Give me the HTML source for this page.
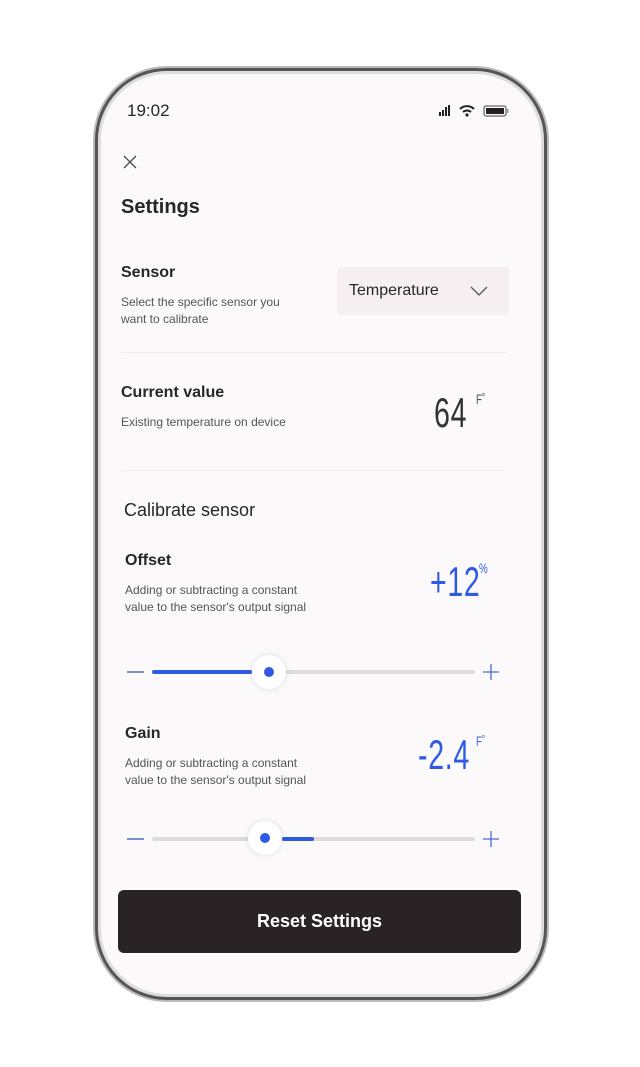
<!DOCTYPE html>
<html><head><meta charset="utf-8"><style>
body{margin:0;width:640px;height:1067px;background:#fff;position:relative;font-family:"Liberation Sans",sans-serif;overflow:hidden}
.phone{position:absolute;left:95px;top:68px;width:446px;height:926px;border:3px solid #555;border-radius:72px;background:#fbf9fa;box-shadow:0 0 0 2px #bbb,inset 0 0 0 3px #ddd}
.a{position:absolute}
.t{color:#2a2527}
.s{color:#555;font-size:12px;line-height:17px}
.h{font-size:16px;font-weight:bold;color:#2a2527}
.line{position:absolute;height:1px;background:#eee}
.num{position:absolute;font-family:"Liberation Sans",sans-serif;font-weight:normal;transform:scaleX(.68);transform-origin:left;white-space:nowrap;letter-spacing:1px;line-height:1}
.unit{position:absolute;font-size:14px;transform:scaleX(.7);transform-origin:left}
.track{position:absolute;height:4px;background:#ddd;border-radius:2px}
.knob{position:absolute;width:34px;height:34px;border-radius:50%;background:#fff;box-shadow:0 0 6px rgba(0,0,0,.12)}
.knob:after{content:"";position:absolute;left:12px;top:12px;width:10px;height:10px;border-radius:50%;background:#2d5be3}
</style></head><body>
<div class="phone"></div>
<div class="a t" style="left:127px;top:101px;font-size:17px">19:02</div>
<svg class="a" style="left:438px;top:104px" width="75" height="14"><rect x="1" y="8" width="2" height="4" fill="#222"/><rect x="4" y="6" width="2" height="6" fill="#222"/><rect x="7" y="3" width="2" height="9" fill="#222"/><rect x="10" y="1" width="2" height="11" fill="#222"/><path d="M22 5a10 10 0 0 1 14 0M25 8a6 6 0 0 1 8 0" stroke="#222" stroke-width="2" fill="none"/><circle cx="29" cy="11" r="1.6" fill="#222"/><rect x="46" y="2" width="22" height="10" rx="2" fill="none" stroke="#444"/><rect x="48" y="4" width="18" height="6" fill="#222"/><rect x="69" y="5" width="1.5" height="4" fill="#999"/></svg>
<svg class="a" style="left:123px;top:155px" width="14" height="14"><path d="M1 1L13 13M13 1L1 13" stroke="#444" stroke-width="1.3"/></svg>
<div class="a t" style="left:121px;top:196px;font-size:20px;font-weight:bold">Settings</div>
<div class="a h" style="left:121px;top:264px">Sensor</div>
<div class="a s" style="left:121px;top:294px">Select the specific sensor you<br>want to calibrate</div>
<div class="a" style="left:337px;top:267px;width:172px;height:48px;background:#f5eff2;border-radius:4px"></div>
<div class="a t" style="left:349px;top:282px;font-size:16px">Temperature</div>
<svg class="a" style="left:470px;top:286px" width="18" height="10"><path d="M1 1L9 9L17 1" stroke="#555" fill="none" stroke-width="1.3"/></svg>
<div class="line" style="left:121px;top:352px;width:386px"></div>
<div class="a h" style="left:121px;top:384px">Current value</div>
<div class="a s" style="left:121px;top:414px">Existing temperature on device</div>
<div class="num" style="left:434px;top:392px;font-size:42px;color:#333">64</div>
<div class="unit" style="left:476px;top:391px;color:#555">F˚</div>
<div class="line" style="left:121px;top:470px;width:386px"></div>
<div class="a t" style="left:124px;top:500px;font-size:18px">Calibrate sensor</div>
<div class="a h" style="left:125px;top:552px">Offset</div>
<div class="a s" style="left:125px;top:582px">Adding or subtracting a constant<br>value to the sensor's output signal</div>
<div class="num" style="left:430px;top:561px;font-size:42px;color:#2d5be3">+12</div>
<div class="unit" style="left:479px;top:560px;color:#2d5be3">%</div>
<div class="a" style="left:127px;top:671px;width:17px;height:1.5px;background:#7a8fd8"></div>
<div class="track" style="left:152px;top:670px;width:323px"></div>
<div class="track" style="left:152px;top:670px;width:100px;background:#2d5be3"></div>
<div class="knob" style="left:252px;top:655px"></div>
<svg class="a" style="left:483px;top:664px" width="16" height="16"><path d="M8 0V16M0 8H16" stroke="#4a6ad8" stroke-width="1.3"/></svg>
<div class="a h" style="left:125px;top:725px">Gain</div>
<div class="a s" style="left:125px;top:755px">Adding or subtracting a constant<br>value to the sensor's output signal</div>
<div class="num" style="left:418px;top:734px;font-size:42px;color:#2d5be3">-2.4</div>
<div class="unit" style="left:476px;top:733px;color:#4a6ad8">F˚</div>
<div class="a" style="left:127px;top:838px;width:17px;height:1.5px;background:#7a8fd8"></div>
<div class="track" style="left:152px;top:837px;width:323px"></div>
<div class="track" style="left:282px;top:837px;width:32px;background:#2d5be3"></div>
<div class="knob" style="left:248px;top:821px"></div>
<svg class="a" style="left:483px;top:831px" width="16" height="16"><path d="M8 0V16M0 8H16" stroke="#4a6ad8" stroke-width="1.3"/></svg>
<div class="a" style="left:118px;top:890px;width:403px;height:63px;background:#2a2325;border-radius:6px;color:#fff;font-size:18px;font-weight:bold;text-align:center;line-height:63px">Reset Settings</div>
</body></html>
